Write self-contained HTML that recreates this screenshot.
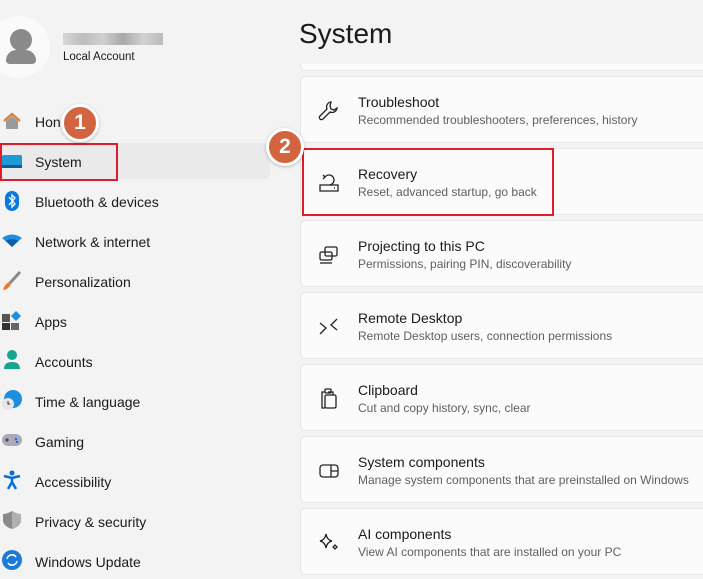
<!DOCTYPE html>
<html><head><style>
*{margin:0;padding:0;box-sizing:border-box}
body{width:703px;height:579px;overflow:hidden;background:#f3f3f3;font-family:"Segoe UI","Liberation Sans",sans-serif;color:#1a1a1a;position:relative}
.abs{position:absolute}
.nav{position:absolute;left:35px;font-size:14px}
.ic{position:absolute;left:2px;width:20px;height:20px}
.card{position:absolute;left:300px;width:420px;height:67px;background:#fbfbfb;border:1px solid #e6e6e6;border-radius:5px}
.card .t{position:absolute;left:57px;top:17px;font-size:14px;color:#1a1a1a}
.card .s{position:absolute;left:57px;top:36px;font-size:12px;color:#5f5f5f;white-space:nowrap}
.card svg{position:absolute;left:16px;top:22px}
.badge{position:absolute;width:38px;height:38px;border-radius:50%;background:#d2643f;border:3px solid #fff;color:#fff;font-weight:bold;font-size:21px;text-align:center;line-height:32px;box-shadow:0 1px 3px rgba(0,0,0,.25)}
</style></head><body>
<div class="abs" style="left:-12px;top:16px;width:62px;height:62px;border-radius:50%;background:#fafafa"></div>
<div class="abs" style="left:10px;top:29px;width:22px;height:22px;border-radius:50%;background:#8a8a8a"></div>
<div class="abs" style="left:6px;top:50px;width:30px;height:14px;border-radius:14px 14px 5px 5px;background:#8a8a8a"></div>
<div class="abs" style="left:63px;top:33px;width:100px;height:12px;background:linear-gradient(90deg,#d8d8d8,#bdbdbd,#d0d0d0,#a8a8a8,#d2d2d2,#bbbbbb)"></div>
<div class="abs" style="left:63px;top:51px;font-size:11.5px">Local Account</div>
<div class="abs" style="left:0;top:143px;width:270px;height:36px;background:#eaeaea;border-radius:5px"></div>
<div class="abs" style="left:0;top:143px;width:118px;height:38px;border:2px solid #e01c2a"></div>

<svg class="ic" style="top:111px" viewBox="0 0 20 20"><path d="M2 10 L10 3 L18 10" fill="none" stroke="#e07a2c" stroke-width="2.2"/><path d="M4 10 L10 5 L16 10 V18 H4Z" fill="#9a9a9a"/></svg>
<div class="nav" style="top:114px">Hon</div>
<svg class="ic" style="top:152px" viewBox="0 0 20 20"><rect x="0" y="3" width="20" height="13" rx="1.5" fill="#1e9bd6"/><rect x="0" y="13" width="20" height="3" fill="#0d5b8f"/></svg>
<div class="nav" style="top:154px">System</div>
<svg class="ic" style="top:191px" viewBox="0 0 20 20"><rect x="3" y="0" width="14" height="20" rx="7" fill="#0a7ae0"/><path d="M7 6 L13 13 L10 16 V4 L13 7 L7 14" fill="none" stroke="#fff" stroke-width="1.3"/></svg>
<div class="nav" style="top:194px">Bluetooth &amp; devices</div>
<svg class="ic" style="top:231px" viewBox="0 0 20 20"><path d="M0 7 Q10 0 20 7 L10 16Z" fill="#1e8ee0"/><path d="M4 10 Q10 6 16 10 L10 16Z" fill="#0c5ea8"/></svg>
<div class="nav" style="top:234px">Network &amp; internet</div>
<svg class="ic" style="top:271px" viewBox="0 0 20 20"><path d="M18 1 L8 12" stroke="#888" stroke-width="3"/><path d="M7 11 L9 13 Q6 19 1 19 Q2 14 7 11Z" fill="#e97b2a"/></svg>
<div class="nav" style="top:274px">Personalization</div>
<svg class="ic" style="top:311px" viewBox="0 0 20 20"><rect x="0" y="3" width="8" height="8" fill="#555"/><rect x="0" y="12" width="8" height="7" fill="#333"/><rect x="9" y="12" width="8" height="7" fill="#666"/><path d="M14 0 L19 5 L14 10 L9 5Z" fill="#1e8ee0"/></svg>
<div class="nav" style="top:314px">Apps</div>
<svg class="ic" style="top:350px" viewBox="0 0 20 20"><circle cx="10" cy="5" r="5" fill="#17a592"/><path d="M2 19 Q2 12 10 12 Q18 12 18 19Z" fill="#17a592"/></svg>
<div class="nav" style="top:354px">Accounts</div>
<svg class="ic" style="top:390px" viewBox="0 0 20 20"><circle cx="11" cy="9" r="9" fill="#1e8ee0"/><circle cx="6" cy="14" r="6" fill="#e6e6e6"/><path d="M6 11V14H8" stroke="#333" fill="none"/></svg>
<div class="nav" style="top:394px">Time &amp; language</div>
<svg class="ic" style="top:431px" viewBox="0 0 20 20"><rect x="0" y="3" width="20" height="12" rx="6" fill="#aab"/><path d="M3 9h4M5 7v4" stroke="#333"/><circle cx="14" cy="8" r="1.2" fill="#1e6fd0"/><circle cx="15" cy="11" r="1.2" fill="#1e6fd0"/></svg>
<div class="nav" style="top:434px">Gaming</div>
<svg class="ic" style="top:470px" viewBox="0 0 20 20"><circle cx="10" cy="3" r="2.5" fill="#0a6fd0"/><path d="M2 6 L10 8 L18 6 M10 8 V12 L6 19 M10 12 L14 19" stroke="#0a6fd0" stroke-width="2.5" fill="none"/></svg>
<div class="nav" style="top:474px">Accessibility</div>
<svg class="ic" style="top:510px" viewBox="0 0 20 20"><path d="M10 1 Q5 4 1 4 V10 Q1 16 10 19 Q19 16 19 10 V4 Q15 4 10 1Z" fill="#8a8a8a"/><path d="M10 1 V19 Q19 16 19 10 V4 Q15 4 10 1Z" fill="#b0b0b0"/></svg>
<div class="nav" style="top:514px">Privacy &amp; security</div>
<svg class="ic" style="top:550px" viewBox="0 0 20 20"><circle cx="10" cy="10" r="10" fill="#1a7ad8"/><path d="M5 9 A5 5 0 0 1 14 7 M15 11 A5 5 0 0 1 6 13" stroke="#fff" stroke-width="1.6" fill="none"/></svg>
<div class="nav" style="top:554px">Windows Update</div>

<div class="card" style="top:4px"></div>
<div class="abs" style="left:290px;top:0;width:413px;height:64px;background:#f3f3f3"></div>
<div class="abs" style="left:299px;top:18px;font-size:28px;font-weight:normal;color:#1a1a1a">System</div>
<div class="card" style="top:76px"><svg width="24" height="24" viewBox="0 0 24 24" fill="none" stroke="#222" stroke-width="1.3"><path d="M14 3 a5 5 0 0 0 -4 7 L3 17 a2 2 0 0 0 3 3 L13 13 a5 5 0 0 0 7 -4 L17 11 L14 10 L13 7 Z"/></svg><div class="t">Troubleshoot</div><div class="s">Recommended troubleshooters, preferences, history</div></div>
<div class="card" style="top:148px"><svg width="24" height="24" viewBox="0 0 24 24" fill="none" stroke="#222" stroke-width="1.3"><path d="M3 14 H21 V20 H3Z M17 17 h1 M8 6 A5 5 0 1 1 12 14 M6 4 L8 6 L6 8"/></svg><div class="t">Recovery</div><div class="s">Reset, advanced startup, go back</div></div>
<div class="card" style="top:220px"><svg width="24" height="24" viewBox="0 0 24 24" fill="none" stroke="#222" stroke-width="1.3"><rect x="8" y="4" width="12" height="9" rx="1.5"/><rect x="3" y="9" width="12" height="8" rx="1.5"/><path d="M3 20 H15"/></svg><div class="t">Projecting to this PC</div><div class="s">Permissions, pairing PIN, discoverability</div></div>
<div class="card" style="top:292px"><svg width="24" height="24" viewBox="0 0 24 24" fill="none" stroke="#222" stroke-width="1.3"><path d="M3 8 L9 13 L3 19 M20 4 L14 10 L20 15"/></svg><div class="t">Remote Desktop</div><div class="s">Remote Desktop users, connection permissions</div></div>
<div class="card" style="top:364px"><svg width="24" height="24" viewBox="0 0 24 24" fill="none" stroke="#222" stroke-width="1.3"><path d="M8 5 H5 V21 H8 M11 5 H16 V8"/><rect x="8" y="8" width="11" height="13" rx="1.5"/><rect x="8" y="2" width="6" height="4" rx="1"/></svg><div class="t">Clipboard</div><div class="s">Cut and copy history, sync, clear</div></div>
<div class="card" style="top:436px"><svg width="24" height="24" viewBox="0 0 24 24" fill="none" stroke="#222" stroke-width="1.3"><rect x="3" y="6" width="18" height="12" rx="3"/><path d="M14 6 V18 M14 12 H21"/></svg><div class="t">System components</div><div class="s">Manage system components that are preinstalled on Windows</div></div>
<div class="card" style="top:508px"><svg width="24" height="24" viewBox="0 0 24 24" fill="none" stroke="#222" stroke-width="1.3"><path d="M9 3 Q10 9 15 10 Q10 11 9 17 Q8 11 3 10 Q8 9 9 3Z M18 14 L20 16 L18 18 L16 16Z"/></svg><div class="t">AI components</div><div class="s">View AI components that are installed on your PC</div></div>

<div class="abs" style="left:302px;top:148px;width:252px;height:68px;border:2px solid #e01c2a"></div>
<div class="badge" style="left:61px;top:104px">1</div>
<div class="badge" style="left:266px;top:128px">2</div>
</body></html>
